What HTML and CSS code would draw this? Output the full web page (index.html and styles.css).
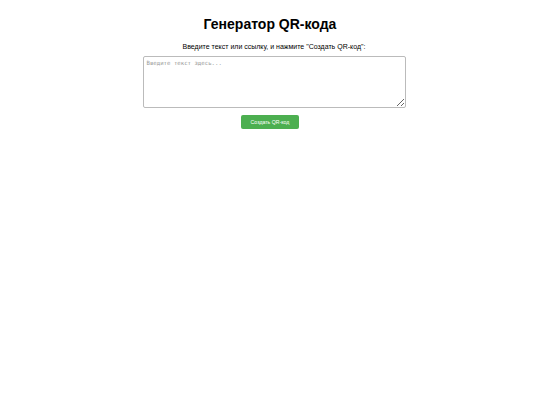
FILE: index.html
```html
<!DOCTYPE html>
<html lang="ru">
<head>
<meta charset="utf-8">
<link rel="stylesheet" href="styles.css">
</head>
<body>
<div class="container">
  <h1 class="title">Генератор QR-кода</h1>
  <p class="hint">Введите текст или ссылку, и нажмите "Создать QR-код":</p>
  <textarea class="input" placeholder="Введите текст здесь..."></textarea>
  <button class="btn">Создать QR-код</button>
</div>
</body>
</html>
```
FILE: styles.css
```css
html, body {
  margin: 0;
  padding: 0;
  background: #fff;
}
body {
  font-family: "Liberation Sans", Arial, sans-serif;
  color: #000;
}
.container {
  display: flex;
  flex-direction: column;
  align-items: center;
  padding-top: 16px;
}
.title {
  font-size: 14px;
  font-weight: bold;
  line-height: 16px;
  margin: 0;
}
.hint {
  font-size: 7px;
  line-height: 9px;
  margin: 10px 0 0 8px;
}
.input {
  box-sizing: border-box;
  width: 263px;
  height: 52px;
  margin: 5px 0 0 8px;
  border: 1px solid #bbb;
  border-radius: 2px;
  padding: 3px 3px;
  font-family: "DejaVu Sans Mono", monospace;
  font-size: 5.7px;
  resize: vertical;
}
.input::placeholder {
  color: #999;
}
.btn {
  margin-top: 7px;
  width: 58px;
  height: 14px;
  padding: 0;
  border: none;
  border-radius: 2px;
  background: #4caf50;
  color: #fff;
  font-family: "Liberation Sans", Arial, sans-serif;
  font-size: 5.2px;
}
```
